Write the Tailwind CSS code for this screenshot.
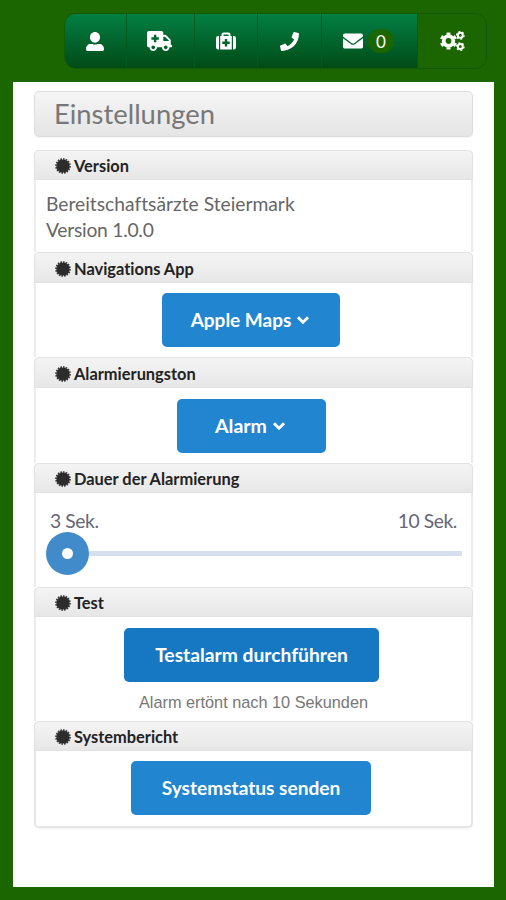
<!DOCTYPE html>
<html lang="de">
<head>
    <meta charset="UTF-8" />
    <meta name="viewport" content="width=device-width, initial-scale=1.0" />
    <title>Einstellungen | Bereitschaftsärzte Steiermark</title>
    <script src="https://cdn.jsdelivr.net/npm/@tailwindcss/browser@4"></script>
</head>
<body class="h-[900px] overflow-hidden bg-[#1b6600] font-['Lato',sans-serif] text-[#666] [font-variant-ligatures:none]">
    <svg class="hidden">
        <symbol id="badge" viewBox="-8 -8 16 16">
            <circle r="6.600" />
            <circle r="7" fill="none" stroke="#2c2c2c" stroke-width="1.600" pathLength="160" stroke-dasharray="6 4" />
        </symbol>
        <symbol id="chevron" viewBox="0 0 12 8">
            <path d="M1 1.200L6 6.200L11 1.200" fill="none" stroke="currentColor" stroke-width="2.900" />
        </symbol>
    </svg>

    <nav class="ml-16 mt-[13px] flex h-14 w-[423px] overflow-hidden rounded-xl border border-[#115a0a] text-white">
        <a href="#" class="flex w-[62px] items-center justify-center border-r border-[#035a20] bg-linear-to-b from-[#028043] to-[#014b16]">
            <svg class="h-[19px] w-[18px] -translate-x-px" viewBox="0 0 512 512" preserveAspectRatio="none" fill="currentColor"><path d="M256 288c79.500 0 144-64.500 144-144S335.500 0 256 0 112 64.500 112 144s64.500 144 144 144zm128 32h-55.100c-22.200 10.200-46.900 16-72.900 16s-50.600-5.800-72.900-16H128C57.300 320 0 377.300 0 448v16c0 26.500 21.500 48 48 48h416c26.500 0 48-21.500 48-48v-16c0-70.700-57.300-128-128-128z" /></svg>
        </a>
        <a href="#" class="flex w-[68px] items-center justify-center border-r border-[#035a20] bg-linear-to-b from-[#028043] to-[#014b16]">
            <svg class="h-5 w-[25px] -translate-x-px" viewBox="0 0 640 512" fill="currentColor"><path d="M624 352h-16V243.900c0-12.700-5.100-24.900-14.100-33.900L494 110.100c-9-9-21.200-14.100-33.900-14.100H416V48c0-26.500-21.500-48-48-48H48C21.500 0 0 21.500 0 48v320c0 26.500 21.500 48 48 48h16c0 53 43 96 96 96s96-43 96-96h128c0 53 43 96 96 96s96-43 96-96h48c8.800 0 16-7.200 16-16v-32c0-8.800-7.200-16-16-16zM160 464c-26.500 0-48-21.500-48-48s21.500-48 48-48 48 21.500 48 48-21.500 48-48 48zm144-248c0 4.400-3.600 8-8 8h-56v56c0 4.400-3.600 8-8 8h-48c-4.400 0-8-3.600-8-8v-56h-56c-4.400 0-8-3.600-8-8v-48c0-4.400 3.600-8 8-8h56v-56c0-4.400 3.600-8 8-8h48c4.400 0 8 3.600 8 8v56h56c4.400 0 8 3.600 8 8v48zm176 248c-26.500 0-48-21.500-48-48s21.500-48 48-48 48 21.500 48 48-21.500 48-48 48zm80-208H416V144h44.100l99.900 99.900V256z" /></svg>
        </a>
        <a href="#" class="flex w-[63px] items-center justify-center border-r border-[#035a20] bg-linear-to-b from-[#028043] to-[#014b16]">
            <svg class="h-[18px] w-5" viewBox="0 0 20 18" fill="currentColor">
                <path d="M2.200 4H3V17.500H2.200Q0 17.500 0 15.300V6.200Q0 4 2.200 4ZM17 4H17.800Q20 4 20 6.200V15.300Q20 17.500 17.800 17.500H17Z" />
                <path fill-rule="evenodd" d="M4.200 4H5.500V2.500Q5.500 .5 7.500 .5H12.500Q14.500 .5 14.500 2.500V4H15.800V17.500H4.200ZM7.500 2.500V4H12.500V2.500ZM8.800 7V9.500H6.300V12H8.800V14.500H11.200V12H13.700V9.500H11.200V7Z" />
            </svg>
        </a>
        <a href="#" class="flex w-16 items-center justify-center border-r border-[#035a20] bg-linear-to-b from-[#028043] to-[#014b16]">
            <svg class="size-[19px]" viewBox="0 0 512 512" fill="currentColor"><path d="M493.400 24.600l-104-24c-11.300-2.600-22.900 3.300-27.500 13.900l-48 112c-4.200 9.800-1.400 21.300 6.900 28l60.600 49.600c-36 76.700-98.900 140.500-177.200 177.200l-49.600-60.600c-6.800-8.300-18.200-11.100-28-6.900l-112 48C3.900 366.500-2 378.100.6 389.400l24 104C27.100 504.200 36.700 512 48 512c256.100 0 464-207.500 464-464 0-11.200-7.700-20.900-18.600-23.400z" /></svg>
        </a>
        <a href="#" class="flex w-24 items-center justify-center gap-[5px] border-r border-[#035a20] bg-linear-to-b from-[#028043] to-[#014b16] pr-0.5">
            <svg class="size-5" viewBox="0 0 512 512" fill="currentColor"><path d="M502.300 190.800c3.900-3.100 9.700-.2 9.700 4.700V400c0 26.500-21.500 48-48 48H48c-26.500 0-48-21.500-48-48V195.600c0-5 5.700-7.800 9.700-4.700 22.400 17.400 52.100 39.500 154.100 113.600 21.100 15.400 56.700 47.800 92.200 47.600 35.700.3 72-32.800 92.300-47.600 102-74.100 131.600-96.300 154-113.700zM256 320c23.200.4 56.600-29.200 73.400-41.400 132.700-96.300 142.800-104.700 173.400-128.700 5.800-4.500 9.200-11.500 9.200-18.900v-19c0-26.500-21.500-48-48-48H48c-26.500 0-48 21.500-48 48v19c0 7.400 3.400 14.300 9.200 18.900 30.600 23.900 40.700 32.400 173.400 128.700 16.800 12.200 50.200 41.800 73.400 41.400z" /></svg>
            <span class="flex h-6 w-[26px] items-center justify-center rounded-full bg-[#1b6600] pt-0.5 text-[17px]">0</span>
        </a>
        <a href="#" class="flex flex-1 items-center justify-center bg-[#1b6600]">
            <svg class="h-5 w-[25px]" viewBox="0 0 25 20" fill="none" stroke="currentColor">
                <circle cx="8.500" cy="10" r="4.800" stroke-width="3.800" />
                <circle cx="8.500" cy="10" r="7.500" stroke-width="2.200" pathLength="60" stroke-dasharray="5 5" stroke-dashoffset="-2.500" />
                <circle cx="20.300" cy="4.300" r="2.500" stroke-width="2" />
                <circle cx="20.300" cy="4.300" r="3.800" stroke-width="1.200" pathLength="60" stroke-dasharray="5 5" />
                <circle cx="20.300" cy="15.600" r="2.500" stroke-width="2" />
                <circle cx="20.300" cy="15.600" r="3.800" stroke-width="1.200" pathLength="60" stroke-dasharray="5 5" />
            </svg>
        </a>
    </nav>

    <main class="ml-[13px] mt-[13px] h-[805px] w-[481px] bg-white pl-[21px] pt-[9px]">
        <h1 class="h-[46px] w-[439px] rounded-[5px] border border-[#dedede] bg-linear-to-b from-[#f5f5f5] to-[#e5e5e5] pl-[19px] text-[27.400px] leading-[44px] text-[#777] shadow-xs">Einstellungen</h1>

        <div class="mt-[13px] w-[439px] rounded-[5px] shadow-xs">
            <section class="h-[102px] rounded-t-[5px] border-x-2 border-[#ececec]">
                <h2 class="-mx-0.5 flex h-[30px] items-center gap-[3px] rounded-t-[5px] border border-[#e2e2e2] bg-linear-to-b from-[#f4f4f4] to-[#e7e7e7] pl-5 pt-0.5 text-[16.400px] leading-6 font-bold text-[#222]">
                    <svg class="size-4 shrink-0 fill-[#2c2c2c]"><use href="#badge" /></svg>Version
                </h2>
                <p class="pl-2.5 pt-[11px] text-[19.250px] leading-[26px]">Bereitschaftsärzte Steiermark<br /><span class="tracking-[-0.25px]">Version 1.0.0</span></p>
            </section>

            <section class="h-[105px] rounded-t-[5px] border-x-2 border-[#ececec]">
                <h2 class="-mx-0.5 flex h-[31px] items-center gap-[3px] rounded-t-[5px] border border-[#e2e2e2] bg-linear-to-b from-[#f4f4f4] to-[#e7e7e7] pl-5 pt-0.5 text-[16.400px] leading-6 font-bold text-[#222]">
                    <svg class="size-4 shrink-0 fill-[#2c2c2c]"><use href="#badge" /></svg>Navigations App
                </h2>
                <button class="ml-[126px] mt-2.5 flex h-[54px] w-[178px] items-center justify-center gap-1.5 rounded-[5px] bg-[#2185d0] pr-0.5 text-[19px] font-bold text-white">
                    Apple Maps <svg class="h-2 w-3"><use href="#chevron" /></svg>
                </button>
            </section>

            <section class="h-[106px] rounded-t-[5px] border-x-2 border-[#ececec]">
                <h2 class="-mx-0.5 flex h-[31px] items-center gap-[3px] rounded-t-[5px] border border-[#e2e2e2] bg-linear-to-b from-[#f4f4f4] to-[#e7e7e7] pl-5 pt-0.5 text-[16.400px] leading-6 font-bold text-[#222]">
                    <svg class="size-4 shrink-0 fill-[#2c2c2c]"><use href="#badge" /></svg>Alarmierungston
                </h2>
                <button class="ml-[141px] mt-[11px] flex h-[54px] w-[149px] items-center justify-center gap-1.5 rounded-[5px] bg-[#2185d0] pr-[3px] text-[19.500px] font-bold text-white">
                    Alarm <svg class="h-2 w-3"><use href="#chevron" /></svg>
                </button>
            </section>

            <section class="h-[124px] rounded-t-[5px] border-x-2 border-[#ececec]">
                <h2 class="-mx-0.5 flex h-[30px] items-center gap-[3px] rounded-t-[5px] border border-[#e2e2e2] bg-linear-to-b from-[#f4f4f4] to-[#e7e7e7] pl-5 pt-0.5 text-[16.400px] leading-6 font-bold text-[#222]">
                    <svg class="size-4 shrink-0 fill-[#2c2c2c]"><use href="#badge" /></svg>Dauer der Alarmierung
                </h2>
                <div class="flex justify-between px-3.5 pt-4 text-[19.250px] leading-6 tracking-[-0.4px] text-[#667]">
                    <span>3 Sek.</span><span>10 Sek.</span>
                </div>
                <div class="-mt-px ml-2.5 flex w-[416px] items-center">
                    <span class="flex size-[43px] shrink-0 items-center justify-center rounded-full bg-[#428bca]"><span class="size-[11px] rounded-full bg-white"></span></span>
                    <span class="h-[5px] flex-1 bg-[#d5dff0]"></span>
                </div>
            </section>

            <section class="h-[134px] rounded-t-[5px] border-x-2 border-[#ececec]">
                <h2 class="-mx-0.5 flex h-[30px] items-center gap-[3px] rounded-t-[5px] border border-[#e2e2e2] bg-linear-to-b from-[#f4f4f4] to-[#e7e7e7] pl-5 pt-0.5 text-[16.400px] leading-6 font-bold text-[#222]">
                    <svg class="size-4 shrink-0 fill-[#2c2c2c]"><use href="#badge" /></svg>Test
                </h2>
                <button class="ml-[88px] mt-[11px] flex h-[54px] w-[255px] items-center justify-center rounded-[5px] bg-[#1678c2] text-[19.250px] font-bold text-white">Testalarm durchführen</button>
                <p class="mt-2 text-center font-['Liberation_Sans',sans-serif] text-[16.300px] leading-6 text-[#777]">Alarm ertönt nach 10 Sekunden</p>
            </section>

            <section class="h-[107px] rounded-[5px] border-x-2 border-b-2 border-[#e6e6e6]">
                <h2 class="-mx-0.5 flex h-[30px] items-center gap-[3px] rounded-t-[5px] border border-[#e2e2e2] bg-linear-to-b from-[#f4f4f4] to-[#e7e7e7] pl-5 pt-0.5 text-[16.400px] leading-6 font-bold text-[#222]">
                    <svg class="size-4 shrink-0 fill-[#2c2c2c]"><use href="#badge" /></svg>Systembericht
                </h2>
                <button class="ml-[95px] mt-2.5 flex h-[54px] w-[240px] items-center justify-center rounded-[5px] bg-[#2185d0] text-[19.100px] font-bold text-white">Systemstatus senden</button>
            </section>
        </div>
    </main>
</body>
</html>
